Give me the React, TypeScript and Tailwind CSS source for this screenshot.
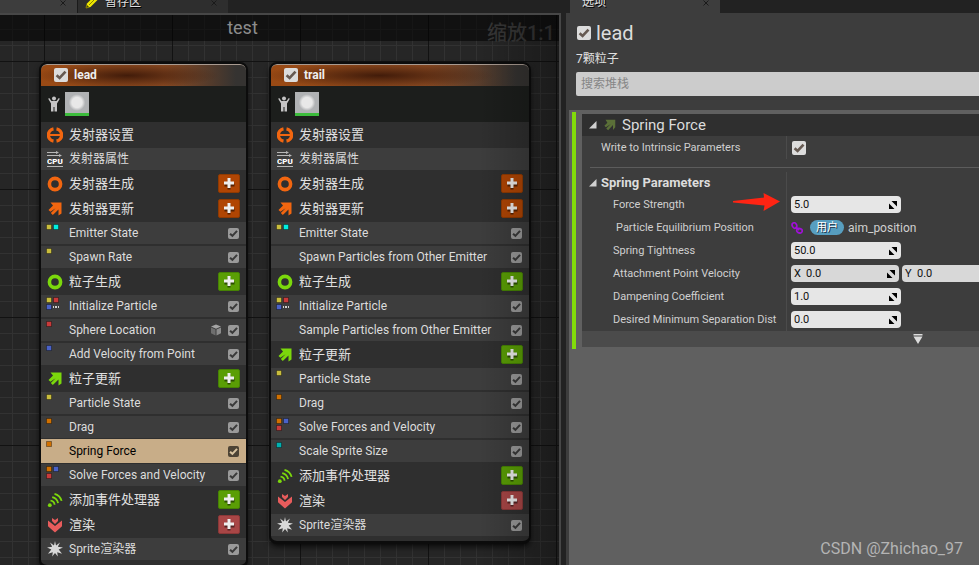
import { useId, type ReactNode } from "react";
import clsx from "clsx";

type IconName =
  | "settings"
  | "cpu"
  | "ring"
  | "arrow"
  | "event"
  | "render"
  | "sprite";

type Tone = "orange" | "green" | "red";

type Section = {
  icon: IconName;
  label: string;
  tone: Tone;
};

type Module = {
  label: string;
  dots?: string[];
  icon?: IconName;
  cube?: boolean;
  more?: boolean;
  selected?: boolean;
};

type Group = {
  sections: Section[];
  modules: Module[];
};

const YELLOW = "#c9bd3c";
const CYAN = "#00f0e0";
const TEAL = "#00b0b0";
const RED = "#c83a3a";
const BLUE = "#4a62c8";
const ORANGE = "#d07000";

const emitterSections: Section[] = [
  { icon: "ring", label: "发射器生成", tone: "orange" },
  { icon: "arrow", label: "发射器更新", tone: "orange" },
];

const spawnSection: Section[] = [
  { icon: "ring", label: "粒子生成", tone: "green" },
];

const updateSection: Section[] = [
  { icon: "arrow", label: "粒子更新", tone: "green" },
];

const outputSections: Section[] = [
  { icon: "event", label: "添加事件处理器", tone: "green" },
  { icon: "render", label: "渲染", tone: "red" },
];

const leadGroups: Group[] = [
  {
    sections: emitterSections,
    modules: [
      { label: "Emitter State", dots: [YELLOW, CYAN] },
      { label: "Spawn Rate", dots: [YELLOW] },
    ],
  },
  {
    sections: spawnSection,
    modules: [
      { label: "Initialize Particle", dots: [YELLOW, RED, BLUE], more: true },
      { label: "Sphere Location", dots: [RED], cube: true },
      { label: "Add Velocity from Point", dots: [BLUE] },
    ],
  },
  {
    sections: updateSection,
    modules: [
      { label: "Particle State", dots: [YELLOW] },
      { label: "Drag", dots: [ORANGE] },
      { label: "Spring Force", dots: [ORANGE], selected: true },
      { label: "Solve Forces and Velocity", dots: [ORANGE, BLUE, RED] },
    ],
  },
  {
    sections: outputSections,
    modules: [{ label: "Sprite渲染器", icon: "sprite" }],
  },
];

const trailGroups: Group[] = [
  {
    sections: emitterSections,
    modules: [
      { label: "Emitter State", dots: [YELLOW, CYAN] },
      { label: "Spawn Particles from Other Emitter" },
    ],
  },
  {
    sections: spawnSection,
    modules: [
      { label: "Initialize Particle", dots: [YELLOW, RED, BLUE], more: true },
      { label: "Sample Particles from Other Emitter" },
    ],
  },
  {
    sections: updateSection,
    modules: [
      { label: "Particle State", dots: [YELLOW] },
      { label: "Drag", dots: [ORANGE] },
      { label: "Solve Forces and Velocity", dots: [ORANGE, BLUE, RED] },
      { label: "Scale Sprite Size", dots: [TEAL] },
    ],
  },
  {
    sections: outputSections,
    modules: [{ label: "Sprite渲染器", icon: "sprite" }],
  },
];

const iconTones = {
  orange: "text-[#f26610]",
  green: "text-[#7bd80c]",
  red: "text-[#e85c5c]",
};

const buttonTones = {
  orange: "border-[#8f3a02] bg-[#b04503]",
  green: "border-[#468204] bg-[#5a9e05]",
  red: "border-[#8a3838] bg-[#a84646]",
};

function StackIcon({ name }: { name: IconName }) {
  return (
    <svg viewBox="0 0 16 16" className="size-4 shrink-0" fill="currentColor">
      {name === "settings" && (
        <g fill="none" stroke="currentColor">
          <path
            d="M6.500 1.900a6.200 6.200 0 0 0 0 12.200M9.500 1.900a6.200 6.200 0 0 1 0 12.200"
            strokeWidth="3.400"
          />
          <path d="M3 8h10" strokeWidth="2" />
        </g>
      )}
      {name === "cpu" && (
        <>
          <path
            d="M0 1.500h9M0 4.500h12M0 15.500h16"
            stroke="#b8b8b8"
            strokeWidth="1"
          />
          <path d="M9 0l3 1.500L9 3zM12 3l3 1.500L12 6z" fill="#b8b8b8" />
          <text
            x="8"
            y="13"
            textAnchor="middle"
            fontSize="8"
            fontWeight="900"
            fontFamily="Roboto, sans-serif"
            fill="#fff"
          >
            CPU
          </text>
        </>
      )}
      {name === "ring" && (
        <circle
          cx="8"
          cy="8"
          r="5.600"
          fill="none"
          stroke="currentColor"
          strokeWidth="3.600"
        />
      )}
      {name === "arrow" && (
        <path d="M3.500 1.500h11v11L11.500 14.500V8.500L5.800 14 3.800 12l4.800-4.800-5.200 3.600L1.500 9 6 4.600z" />
      )}
      {name === "event" && (
        <g fill="none" stroke="currentColor" strokeWidth="1.800">
          <circle cx="2.800" cy="13.200" r="1.900" fill="currentColor" stroke="none" />
          <path d="M3.500 8.600c2.400.2 3.900 1.700 4.100 4.100M5.200 5.200c3.300.7 5.200 2.700 5.900 5.900M7.500 1.800c3.900 1 6.100 3.200 7.100 7.100" />
        </g>
      )}
      {name === "render" && (
        <path d="M1 3.500l7 5.500 7-5.500v5.800l-7 6.200-7-6.200zM5 1l3 2 3-2v3L8 7 5 4z" />
      )}
      {name === "sprite" && (
        <path
          d="M8 0l1 4.500L13 1.500l-2.200 4.300L16 6.500l-4.300 2L15 12.800l-4.800-1.500.6 4.200L8 12l-2.800 3.500.6-4.200L1 12.800l3.300-4.300L0 6.500l5.200-.7L3 1.500l4 3z"
          fill="#d8d8d8"
        />
      )}
    </svg>
  );
}

function Dots({ colors, more }: { colors: string[]; more?: boolean }) {
  return (
    <svg viewBox="1 0 16 16" className="size-4 shrink-0 overflow-visible">
      {colors.map((color, index) => (
        <rect
          key={index}
          x={(index % 2) * 7 + 0.5}
          y={Math.floor(index / 2) * 7 + 0.5}
          width="5"
          height="5"
          fill={color}
          stroke="#000"
          strokeOpacity="0.35"
        />
      ))}
      {more && (
        <path
          d="M7 10h1M9 10h2M12 10h1"
          stroke="#d0d0d0"
          strokeWidth="2"
        />
      )}
    </svg>
  );
}

function Checkbox({
  id,
  kind = "large",
}: {
  id: string;
  kind?: "large" | "small" | "dark";
}) {
  return (
    <span className="grid shrink-0">
      <input
        id={id}
        type="checkbox"
        defaultChecked
        className={clsx(
          "peer col-start-1 row-start-1 appearance-none rounded-xs",
          kind === "large" && "size-3.5 bg-[#dcdcdc]",
          kind === "small" && "size-[11px] bg-[#9a9a9a]",
          kind === "dark" && "size-[11px] bg-[#4d4335]",
        )}
      />
      <svg
        viewBox="0 0 14 14"
        className={clsx(
          "pointer-events-none invisible col-start-1 row-start-1 peer-checked:visible",
          kind === "large" && "size-3.5 text-[#665a52]",
          kind === "small" && "size-[11px] text-[#3a3a3a]",
          kind === "dark" && "size-[11px] text-[#d8c3a0]",
        )}
        fill="none"
        stroke="currentColor"
        strokeWidth="2.600"
      >
        <path d="M2.600 7.200l3 2.800L11.500 3.600" />
      </svg>
    </span>
  );
}

function SectionRow({ section }: { section: Section }) {
  return (
    <div className="flex h-[25px] items-center gap-1.5 px-1.5">
      <span className={iconTones[section.tone]}>
        <StackIcon name={section.icon} />
      </span>
      <h3 className="flex-1 text-[13px] text-[#e0e0e0]">{section.label}</h3>
      <button
        type="button"
        aria-label={`Add ${section.label}`}
        className={clsx(
          "grid h-[19px] w-[22px] place-items-center rounded-xs border",
          buttonTones[section.tone],
        )}
      >
        <svg viewBox="0 0 12 12" className="size-3">
          <path
            d="M6 1.500v10M1.500 7h10"
            stroke="#000"
            strokeOpacity="0.5"
            strokeWidth="3"
          />
          <path d="M6 0v10M1 5h10" stroke="#eee" strokeWidth="3" />
        </svg>
      </button>
    </div>
  );
}

function ModuleRow({ module }: { module: Module }) {
  const id = useId();

  return (
    <div
      className={clsx(
        "flex items-center gap-1.5 pr-[7px] pl-1.5 text-xs",
        module.selected
          ? "-my-px h-6 bg-[#c8ad88] text-black"
          : "h-[22px] bg-[#3d3d3d] text-[#dcdcdc]",
      )}
    >
      {module.icon ? (
        <StackIcon name={module.icon} />
      ) : (
        <span className="self-start pt-0.5">
          <Dots colors={module.dots ?? []} more={module.more} />
        </span>
      )}
      <label htmlFor={id} className="flex-1 whitespace-nowrap">
        {module.label}
      </label>
      {module.cube && (
        <svg viewBox="0 0 12 12" className="size-3">
          <path d="M6 .500l5 2-5 2.300-5-2.300z" fill="#a5a5a5" />
          <path d="M1 3.500l4.500 2v6L1 9.300z" fill="#6e6e6e" />
          <path d="M11 3.500l-4.500 2v6L11 9.300z" fill="#8c8c8c" />
        </svg>
      )}
      <Checkbox id={id} kind={module.selected ? "dark" : "small"} />
    </div>
  );
}

function EmitterNode({
  name,
  groups,
  className,
}: {
  name: string;
  groups: Group[];
  className: string;
}) {
  const id = useId();

  return (
    <article
      className={clsx(
        "shrink-0 overflow-hidden rounded-lg border-2 border-b-3 border-[#0c0c0c] bg-[#2f2f2f] shadow-md shadow-black/60",
        className,
      )}
    >
      <header className="flex h-[22px] items-center gap-1.5 rounded-t-md border-t border-[#a89a90] bg-[radial-gradient(ellipse_45%_60%_at_42%_50%,#421c0a,transparent),linear-gradient(to_right,#9a4a14,#8a4a22_60%,#353331_95%)] pb-px pl-[13px]">
        <Checkbox id={id} />
        <label htmlFor={id} className="text-xs font-bold text-[#eee]">
          {name}
        </label>
      </header>
      <div className="flex h-9 items-center gap-[5px] bg-[#1c1e1c] pl-[7px]">
        <svg viewBox="0 0 12 16" className="h-4 w-3" fill="#c4c4c4">
          <circle cx="6" cy="2.600" r="2" />
          <path d="M1.200 2l2.300 3h5L10.800 2l1 .800L9 7.500V15.500H6.500V11h-1v4.500H3V7.500L.2 2.800z" />
        </svg>
        <div className="size-6 border-b-3 border-[#3cbc3c] bg-[radial-gradient(circle,#e8e8e8_32%,#b0b2b4_52%)]" />
      </div>
      <div className="flex h-[26px] items-center gap-1.5 pl-1.5 text-[#f26610]">
        <StackIcon name="settings" />
        <h3 className="text-[13px] text-[#e0e0e0]">发射器设置</h3>
      </div>
      <div className="flex h-[22px] items-center gap-1.5 bg-[#3d3d3d] pl-1.5">
        <StackIcon name="cpu" />
        <span className="text-xs text-[#dcdcdc]">发射器属性</span>
      </div>
      {groups.map((group, index) => (
        <section key={index}>
          <div className="py-px">
            {group.sections.map((section) => (
              <SectionRow key={section.label} section={section} />
            ))}
          </div>
          <div className="flex flex-col gap-0.5">
            {group.modules.map((module) => (
              <ModuleRow key={module.label} module={module} />
            ))}
          </div>
        </section>
      ))}
      <div className="h-[5px]" />
    </article>
  );
}

function Canvas() {
  return (
    <div className="relative min-h-0 flex-1 overflow-hidden border-t-2 border-r-2 border-[#474747] bg-[#262626] bg-[linear-gradient(to_right,#121212_1px,transparent_1px),linear-gradient(to_bottom,#121212_1px,transparent_1px),linear-gradient(to_right,#323232_1px,transparent_1px),linear-gradient(to_bottom,#323232_1px,transparent_1px)] bg-[size:128px_128px,128px_128px,16px_16px,16px_16px] bg-position-[44px_46px]">
      <div className="flex h-[26px] items-center justify-center bg-black/55 pr-[74px]">
        <h1 className="text-lg text-[#8c8c8c]">test</h1>
      </div>
      <span className="absolute top-1 right-1 text-xl font-medium text-[#363636]">
        缩放1:1
      </span>
      <div className="flex items-start gap-[21px] pt-[21px] pl-[39px]">
        <EmitterNode name="lead" groups={leadGroups} className="w-[209px]" />
        <EmitterNode name="trail" groups={trailGroups} className="w-[262px]" />
      </div>
      <div className="pointer-events-none absolute inset-y-0 right-0 w-20 bg-linear-to-r from-transparent to-black/30" />
    </div>
  );
}

function Tab({
  label,
  icon,
  className,
}: {
  label?: string;
  icon?: ReactNode;
  className: string;
}) {
  return (
    <div
      className={clsx(
        "flex shrink-0 items-end overflow-hidden text-xs leading-3 text-[#e0e0e0]",
        className,
      )}
    >
      {icon}
      <span className="flex-1 pb-[5px] text-shadow-[1px_1px_0_#000]">
        {label}
      </span>
      <button
        type="button"
        aria-label="Close"
        className="pr-2.5 pb-1.5 text-[#1a1a1a]"
      >
        <svg
          viewBox="0 0 8 8"
          className="size-2"
          stroke="currentColor"
          strokeWidth="1"
        >
          <path d="M1.500 1.500l5 5M6.500 1.500l-5 5" />
        </svg>
      </button>
    </div>
  );
}

function Caret() {
  return (
    <svg viewBox="0 0 8 8" className="size-2 shrink-0" fill="#d0d0d0">
      <path d="M7.500 0v7.500H0z" />
    </svg>
  );
}

function NumberField({
  id,
  value,
  axis,
  label,
}: {
  id?: string;
  value: string;
  axis?: string;
  label?: string;
}) {
  return (
    <div
      className={clsx(
        "flex h-[17px] shrink-0 items-center rounded-sm px-[3px] pt-px text-[11px] leading-4 text-[#111]",
        axis ? "w-[108px] bg-[#d8d8d8]" : "w-[110px] bg-[#e6e6e6]",
      )}
    >
      {axis && <span className="w-3">{axis}</span>}
      <input
        id={id}
        type="text"
        defaultValue={value}
        aria-label={label}
        className="h-4 min-w-0 flex-1 outline-none"
      />
      <svg viewBox="0 0 10 10" className="size-2.5 shrink-0" fill="#000">
        <path d="M3.500 1H9v5.500zM1 3.500V9h5.500z" />
      </svg>
    </div>
  );
}

function Property({
  label,
  htmlFor,
  className = "pl-[31px]",
  children,
}: {
  label: string;
  htmlFor?: string;
  className?: string;
  children?: ReactNode;
}) {
  return (
    <div className="flex h-[23px]">
      <div
        className={clsx(
          "flex w-[205px] shrink-0 items-center border-r border-[#4b4b4b]",
          className,
        )}
      >
        <label
          htmlFor={htmlFor}
          className="pt-px text-[11px] whitespace-nowrap text-[#d0d0d0]"
        >
          {label}
        </label>
      </div>
      <div className="flex min-w-0 flex-1 items-center overflow-hidden pl-1">
        {children}
      </div>
    </div>
  );
}

function SpringForce() {
  return (
    <div className="border-l-4 border-[#82dc0a] py-0.5 pl-1.5">
      <div className="flex h-[22px] items-center bg-[#2f2f2f] pl-[7px]">
        <Caret />
        <svg
          viewBox="0 0 16 16"
          className="mr-1.5 ml-[7px] size-3 shrink-0"
          fill="#5b7038"
        >
          <path d="M2 1h13v10l-3 3.500V8L5.500 15 3 12.500l6-6-6.500 4.500L.5 9l4-4z" />
        </svg>
        <h2 className="text-[15px] text-[#dcdcdc]">Spring Force</h2>
      </div>
      <div className="bg-[#3d3d3d]">
        <Property
          label="Write to Intrinsic Parameters"
          htmlFor="intrinsic"
          className="pl-[19px]"
        >
          <span className="pl-px">
            <Checkbox id="intrinsic" />
          </span>
        </Property>
        <hr className="mt-2 mb-1 ml-2 border-[#5c5c5c]" />
        <div className="flex h-[21px] w-[205px] items-center gap-1 border-r border-[#4b4b4b] pl-[7px]">
          <Caret />
          <h3 className="text-[13px] font-bold text-[#dcdcdc]">
            Spring Parameters
          </h3>
        </div>
        <div className="relative">
          <Property label="Force Strength" htmlFor="strength">
            <NumberField id="strength" value="5.0" />
          </Property>
          <svg
            viewBox="0 0 47 18"
            className="absolute top-0 left-[151px] h-[18px] w-[47px]"
            fill="#ff2413"
          >
            <path d="M0 8l31-3.500L30.500 0 47 8.500 30.500 18l1-5.500L0 9.500z" />
          </svg>
        </div>
        <Property label="Particle Equilibrium Position" className="pl-[34px]">
          <svg
            viewBox="0 0 12 12"
            className="size-3 shrink-0"
            fill="none"
            stroke="#a010d8"
            strokeWidth="1.700"
          >
            <ellipse
              cx="3.500"
              cy="3.500"
              rx="2.200"
              ry="2.800"
              transform="rotate(-30 3.500 3.500)"
            />
            <ellipse
              cx="8.500"
              cy="8.800"
              rx="2.800"
              ry="2.200"
              transform="rotate(15 8.500 8.800)"
            />
            <path d="M4.500 5l3.500 3" />
          </svg>
          <span className="ml-[7px] rounded-full bg-[#579ec0] px-1.5 text-[11px] leading-[15px] text-white text-shadow-[1px_1px_0_#234]">
            用户
          </span>
          <span className="pl-1 text-xs text-[#d0d0d0]">aim_position</span>
        </Property>
        <Property label="Spring Tightness" htmlFor="tightness">
          <NumberField id="tightness" value="50.0" />
        </Property>
        <Property label="Attachment Point Velocity" htmlFor="velocity-x">
          <div className="flex gap-[3px]">
            <NumberField id="velocity-x" axis="X" value="0.0" />
            <NumberField
              axis="Y"
              value="0.0"
              label="Attachment Point Velocity Y"
            />
          </div>
        </Property>
        <Property label="Dampening Coefficient" htmlFor="dampening">
          <NumberField id="dampening" value="1.0" />
        </Property>
        <Property label="Desired Minimum Separation Dist" htmlFor="separation">
          <NumberField id="separation" value="0.0" />
        </Property>
      </div>
      <button
        type="button"
        aria-label="Show advanced"
        className="flex h-4 w-full items-center justify-end bg-[#4b4b4b] pr-14"
      >
        <svg viewBox="0 0 10 10" className="size-2.5" fill="#dcdcdc">
          <path d="M.500 0h9v1.500h-9zM.500 2.500h9L5 10z" />
        </svg>
      </button>
    </div>
  );
}

export default function App() {
  return (
    <main className="relative flex h-screen gap-[5px] overflow-hidden bg-[#222] font-[Roboto,'Noto_Sans_CJK_SC',sans-serif]">
      <div className="flex min-w-0 flex-[561] flex-col">
        <nav className="flex h-[13px]">
          <Tab className="w-[77px] bg-[#3d3d3d]" />
          <Tab
            label="暂存区"
            className="w-[151px] border-l border-[#1a1a1a] bg-[#2e2e2e]"
            icon={
              <svg
                viewBox="0 0 14 14"
                className="mr-1.5 mb-1 ml-[7px] size-3.5 shrink-0"
              >
                <path d="M1 13l1-4.500L9.500 1 13 4.500 5.500 12z" fill="#f0e800" />
                <path
                  d="M1 13l.7-3 2.300 2.300zM4 10l6-6"
                  fill="#222"
                  stroke="#8a8200"
                />
              </svg>
            }
          />
        </nav>
        <Canvas />
      </div>
      <aside className="flex min-w-0 flex-[413] flex-col">
        <nav className="flex h-[13px] pl-1">
          <Tab label="选项" className="w-[150px] bg-[#3d3d3d] pl-3" />
        </nav>
        <div className="flex min-h-0 flex-1 flex-col bg-[#3d3d3d]">
          <div className="flex h-10 items-center gap-[5px] pl-[11px]">
            <Checkbox id="emitter" />
            <label htmlFor="emitter" className="text-xl text-[#dcdcdc]">
              lead
            </label>
          </div>
          <p className="pl-2.5 text-xs leading-3 text-[#e0e0e0]">7颗粒子</p>
          <input
            type="search"
            aria-label="搜索堆栈"
            placeholder="搜索堆栈"
            className="mt-[7px] mb-3.5 ml-2.5 h-6 rounded-l-xs bg-[#ccc] pl-[5px] text-xs outline-none placeholder:text-[#868686]"
          />
          <div className="ml-[3px] flex-1 bg-[#606060] pt-0.5 pl-[3px]">
            <SpringForce />
          </div>
        </div>
      </aside>
      <span className="absolute right-4 bottom-1.5 text-base leading-5 text-[#b4b4b4]">
        CSDN @Zhichao_97
      </span>
    </main>
  );
}
